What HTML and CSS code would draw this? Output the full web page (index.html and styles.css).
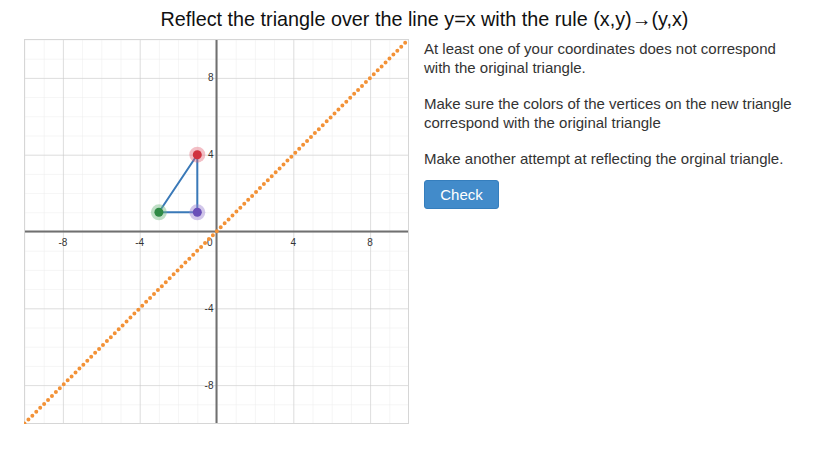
FILE: index.html
```html
<!DOCTYPE html>
<html>
<head>
<meta charset="utf-8">
<link rel="stylesheet" href="styles.css">
</head>
<body>
<h1 class="title">Reflect the triangle over the line y=x with the rule (x,y)→(y,x)</h1>
<div class="main">
  <div class="graph">
    <svg width="385" height="385" viewBox="-0.5 -0.5 385 385" xmlns="http://www.w3.org/2000/svg">
      <defs>
        <pattern id="minor" width="19.2" height="19.2" patternUnits="userSpaceOnUse">
          <path d="M0 0 V19.2 M0 0 H19.2" stroke="#ebebeb" stroke-width="1" fill="none"/>
        </pattern>
        <pattern id="major" x="38.4" y="38.4" width="76.8" height="76.8" patternUnits="userSpaceOnUse">
          <path d="M0 0 V76.8 M0 0 H76.8" stroke="#c8c8c8" stroke-width="1" fill="none"/>
        </pattern>
      </defs>
      <rect x="0" y="0" width="384" height="384" fill="url(#minor)"/>
      <rect x="0" y="0" width="384" height="384" fill="url(#major)"/>
      <g stroke="#707070" stroke-width="2">
        <line x1="192" y1="0" x2="192" y2="384"/>
        <line x1="0" y1="192" x2="384" y2="192"/>
      </g>
      <rect x="0" y="0" width="384" height="384" fill="none" stroke="#d6d6d6"/>
      <g class="lbl" font-size="10" fill="#333">
        <text x="38.4" y="206" text-anchor="middle">-8</text>
        <text x="115.2" y="206" text-anchor="middle">-4</text>
        <text x="188" y="206" text-anchor="end">0</text>
        <text x="268.8" y="206" text-anchor="middle">4</text>
        <text x="345.6" y="206" text-anchor="middle">8</text>
        <text x="189" y="41.9" text-anchor="end">8</text>
        <text x="189" y="118.7" text-anchor="end">4</text>
        <text x="189" y="272.3" text-anchor="end">-4</text>
        <text x="189" y="349.1" text-anchor="end">-8</text>
      </g>
      <line x1="0" y1="384" x2="384" y2="0" stroke="#f39237" stroke-width="4" stroke-linecap="round" stroke-dasharray="0 5.55"/>
      <polygon points="172.8,115.2 172.8,172.8 134.4,172.8" fill="none" stroke="#3a79b8" stroke-width="2" stroke-linejoin="round"/>
      <circle cx="172.8" cy="115.2" r="8" fill="#e06070" opacity="0.4"/>
      <circle cx="172.8" cy="115.2" r="4.5" fill="#d0323f"/>
      <circle cx="172.8" cy="172.8" r="8" fill="#9a80d0" opacity="0.45"/>
      <circle cx="172.8" cy="172.8" r="4.5" fill="#6a4fb8"/>
      <circle cx="134.4" cy="172.8" r="8" fill="#70b880" opacity="0.45"/>
      <circle cx="134.4" cy="172.8" r="4.5" fill="#2f8a45"/>
    </svg>
  </div>
  <div class="side">
    <p class="msg">At least one of your coordinates does not correspond with the original triangle.</p>
    <p class="msg">Make sure the colors of the vertices on the new triangle correspond with the original triangle</p>
    <p class="msg">Make another attempt at reflecting the orginal triangle.</p>
    <button class="btn">Check</button>
  </div>
</div>
</body>
</html>
```
FILE: styles.css
```css
html, body {
  margin: 0;
  padding: 0;
  background: #fff;
  font-family: "Liberation Sans", Arial, sans-serif;
  color: #333;
}
.title {
  margin: 0;
  padding-top: 7px;
  font-size: 19.8px;
  font-weight: normal;
  line-height: 24px;
  text-align: center;
  color: #111;
  padding-left: 10px;
}
.main {
  display: flex;
  padding-left: 24px;
  padding-top: 8px;
  gap: 15px;
}
.graph {
  width: 385px;
  height: 385px;
  flex: none;
}
.graph svg {
  display: block;
}
.lbl text {
  font-family: "Liberation Sans", Arial, sans-serif;
}
.side {
  width: 372px;
}
.msg {
  margin: 0 0 17px 0;
  font-size: 15px;
  line-height: 19px;
  color: #333;
}
.msg:nth-of-type(3) { margin-bottom: 12px; }
.btn {
  display: block;
  width: 75px;
  height: 29px;
  background: #428bca;
  border: 1px solid #357ebd;
  border-radius: 3px;
  color: #fff;
  font-family: "Liberation Sans", Arial, sans-serif;
  font-size: 15px;
  padding: 0;
}
```
